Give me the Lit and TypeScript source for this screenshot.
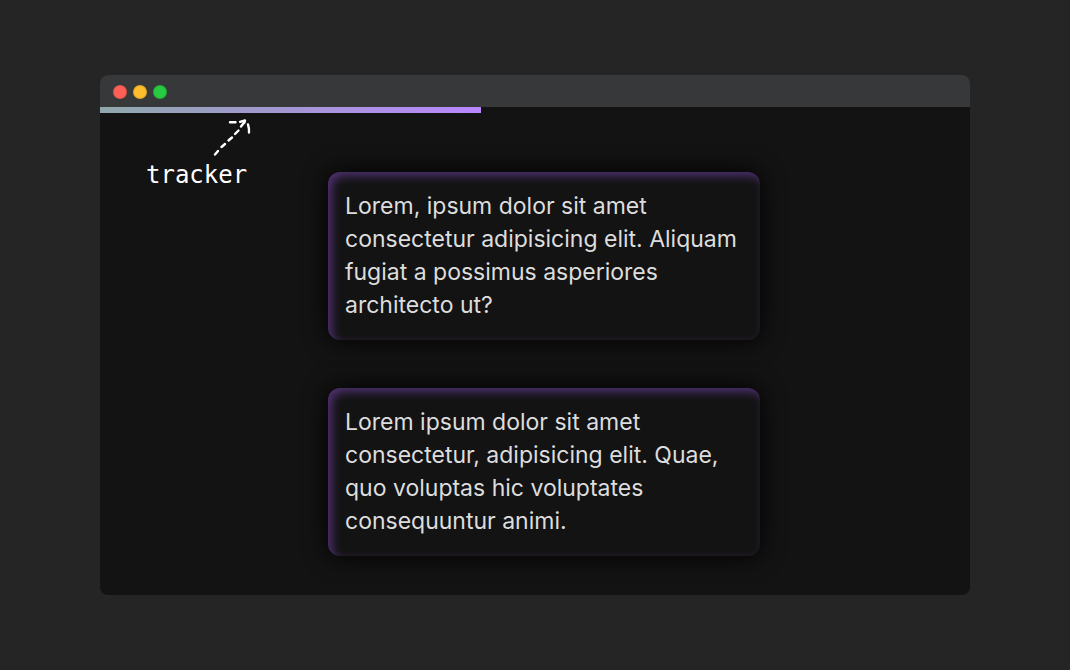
import { LitElement, html, css } from "lit";
import { customElement, property } from "lit/decorators.js";
import { styleMap } from "lit/directives/style-map.js";

@customElement("text-card")
class TextCard extends LitElement {
  @property({ attribute: false }) lines: string[] = [];

  static styles = css`
    :host {
      display: block;
    }
    .card {
      margin: 0;
      padding: 18px 17px;
      border-radius: 12px;
      background: #131313;
      color: #dddddd;
      font: 400 23px/33px Inter, sans-serif;
      box-shadow:
        0 0 24px #000000,
        inset 4px 4px 10px #4e3070;
    }
    .line {
      display: block;
      white-space: nowrap;
    }
  `;

  render() {
    return html`<p class="card">
      ${this.lines.map((line) => html`<span class="line">${line}</span>`)}
    </p>`;
  }
}

@customElement("app-root")
class AppRoot extends LitElement {
  @property({ type: Number }) progress = 43.8;

  private cards = [
    [
      "Lorem, ipsum dolor sit amet",
      "consectetur adipisicing elit. Aliquam",
      "fugiat a possimus asperiores",
      "architecto ut?",
    ],
    [
      "Lorem ipsum dolor sit amet",
      "consectetur, adipisicing elit. Quae,",
      "quo voluptas hic voluptates",
      "consequuntur animi.",
    ],
  ];

  static styles = css`
    :host {
      display: grid;
      align-items: center;
      box-sizing: border-box;
      min-height: 100vh;
      padding: 40px 100px;
      background: #252525;
    }
    .window {
      overflow: hidden;
      border-radius: 8px;
      background: #131313;
    }
    .titlebar {
      display: flex;
      align-items: center;
      gap: 6px;
      padding: 10px 13px 8px;
      background: #373839;
    }
    .dot {
      box-sizing: border-box;
      width: 14px;
      height: 14px;
      border: 1px solid #00000020;
      border-radius: 50%;
    }
    .close {
      background: #ff5f57;
    }
    .minimise {
      background: #ffbd2e;
    }
    .zoom {
      background: #28ca42;
    }
    .track {
      height: 6px;
    }
    .bar {
      height: 100%;
      background: linear-gradient(90deg, #8fa8ab, #ba87ff);
    }
    .content {
      position: relative;
      display: grid;
      grid-template-columns: minmax(0, 432px);
      justify-content: center;
      gap: 48px;
      padding: 59px 0 39px 18px;
    }
    .note {
      position: absolute;
      top: 4px;
      left: 46px;
      color: #ffffff;
      font: 400 24px/28px "DejaVu Sans Mono", monospace;
    }
    .arrow {
      display: block;
      width: 44px;
      height: 44px;
      margin-left: 64px;
    }
  `;

  render() {
    return html`
      <main class="window">
        <header class="titlebar">
          <span class="dot close"></span>
          <span class="dot minimise"></span>
          <span class="dot zoom"></span>
        </header>
        <div
          class="track"
          role="progressbar"
          aria-label="tracker"
          aria-valuenow=${this.progress}
        >
          <div class="bar" style=${styleMap({ width: `${this.progress}%` })}></div>
        </div>
        <section class="content">
          <div class="note">
            <svg
              class="arrow"
              viewBox="0 0 44 44"
              fill="none"
              stroke="#fff"
              stroke-width="2.4"
              stroke-linecap="round"
              stroke-linejoin="round"
              aria-hidden="true"
            >
              <path d="M5 37.5L8 34M11.5 30L15 27M18.500 23.500L22 20.500M25 17L28.500 13.500M31 9.500L34.500 5" />
              <path d="M20 5.200H25.500M30 4.800L35 3.500L34 6M38 7.500Q39.200 11 39 15.500" />
            </svg>
            tracker
          </div>
          ${this.cards.map((lines) => html`<text-card .lines=${lines}></text-card>`)}
        </section>
      </main>
    `;
  }
}
